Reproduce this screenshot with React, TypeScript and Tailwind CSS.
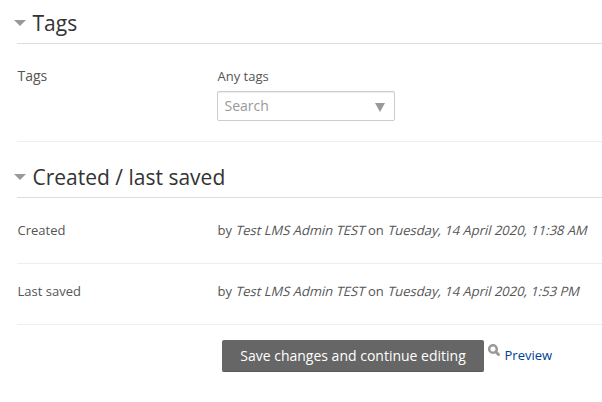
import type { ReactNode } from 'react';

function SectionHeader({ title, className }: { title: string; className: string }) {
  return (
    <div className={`flex border-b border-[#ddd] ml-[17px] ${className}`}>
      <svg className="-ml-[3px] mr-[6.5px] mt-[8px] shrink-0" width="12" height="6" viewBox="0 0 12 6">
        <path d="M0 0h12L6 6z" fill="#999" />
      </svg>
      <h2 className="-mt-px text-[21px] leading-6 text-[#333]">{title}</h2>
    </div>
  );
}

function Row({ label, children, className }: { label: ReactNode; children: ReactNode; className: string }) {
  return (
    <div className={`flex ml-[17px] border-b border-[#eee] ${className}`}>
      <div className="w-[200.5px] shrink-0 pl-[0.5px]">{label}</div>
      <div className="whitespace-nowrap">{children}</div>
    </div>
  );
}

// the slant is a skew of the upright face, which keeps its wider letters
function Stamp({ user, date }: { user: string; date: string }) {
  return (
    <>
      by <em className="inline-block translate-x-[1.4px] -skew-x-14 not-italic">{user}</em> on{' '}
      <em className="inline-block translate-x-[1.4px] -skew-x-14 not-italic">{date}</em>
    </>
  );
}

export default function App() {
  return (
    <div className="h-[402px] w-[602px] overflow-hidden bg-white font-['Open_Sans',sans-serif] text-[13px] leading-5 text-[#555]">
      <SectionHeader title="Tags" className="h-[32px] mt-[12px]" />
      <Row label={<span className="text-[14px]">Tags</span>} className="h-[98px] pt-[22px]">
        <div>Any tags</div>
        <div className="-ml-[0.5px] mt-[5px] flex h-[30px] w-[178px] items-center justify-between rounded-[2px] border border-[#ccc] pl-[6.5px] pr-[9px] shadow-[inset_0_1px_1px_#eee]">
          <input className="w-[130px] text-[14px] outline-none placeholder:text-[#999]" placeholder="Search" />
          <svg className="mt-[2px]" width="10" height="9" viewBox="0 0 10 9">
            <path d="M0 0h10L5 9z" fill="#999" />
          </svg>
        </div>
      </Row>

      <SectionHeader title="Created / last saved" className="h-[32px] mt-[24px]" />
      <Row label="Created" className="h-[66px] pt-[22px]">
        <Stamp user="Test LMS Admin TEST" date="Tuesday, 14 April 2020, 11:38 AM" />
      </Row>
      <Row label="Last saved" className="h-[61px] pt-[17px]">
        <Stamp user="Test LMS Admin TEST" date="Tuesday, 14 April 2020, 1:53 PM" />
      </Row>

      <div className="mt-[15px] ml-[222px] flex">
        <button className="h-[32px] w-[262px] rounded-[2px] border-b border-[#5a5a5a] bg-[#666] text-[14px] text-white">
          Save changes and continue editing
        </button>
        <svg className="mt-[4px] ml-[4px]" width="13" height="13" viewBox="0 0 13 13" fill="none" stroke="#999">
          <circle cx="5" cy="5" r="3.8" strokeWidth="2.5" />
          <path d="M7.8 7.8l2.7 2.7" strokeWidth="3" strokeLinecap="round" />
        </svg>
        <a className="ml-[3.5px] mt-[5px] text-[#003d99]" href="#">Preview</a>
      </div>
    </div>
  );
}
